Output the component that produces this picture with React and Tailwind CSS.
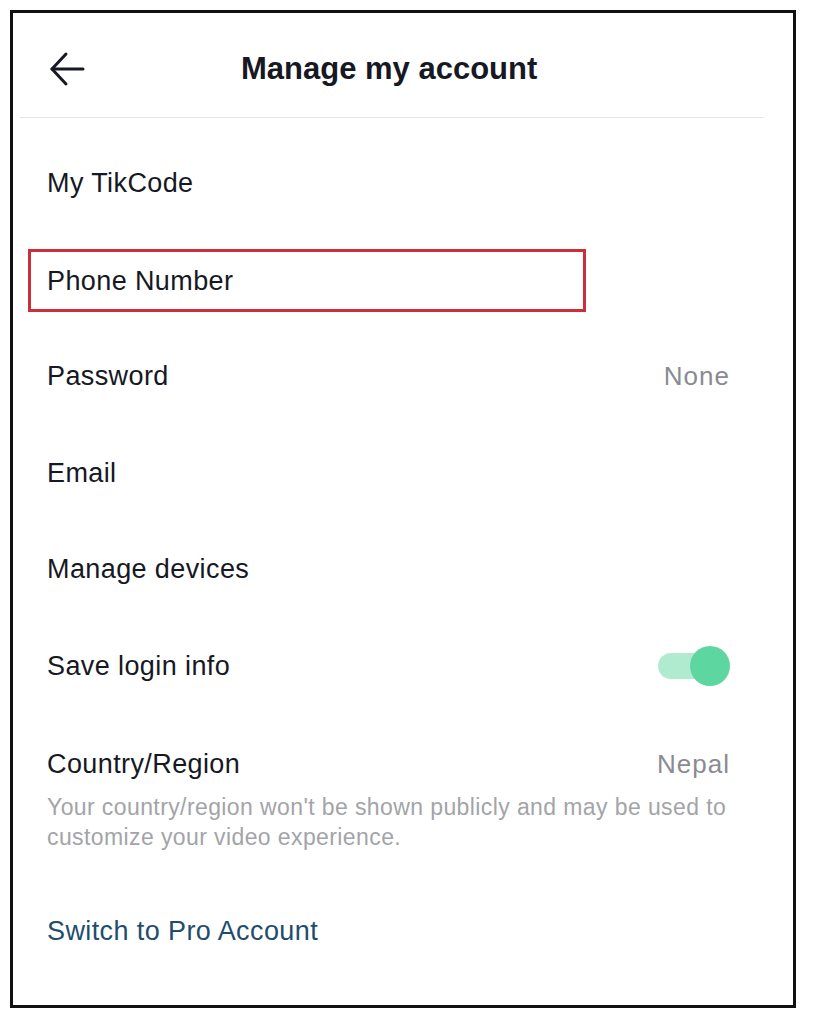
import React from 'react';

const font = { fontFamily: '"Liberation Sans", Arial, sans-serif' };

function BackArrow() {
    return (
        <svg width="36" height="36" viewBox="0 0 36 36" fill="none" stroke="#161823" strokeWidth="3" strokeLinecap="round" strokeLinejoin="round">
            <path d="M34 18H3" />
            <path d="M17 3L3 18l14 15" />
        </svg>
    );
}

function Toggle() {
    return (
        <div className="flex items-center w-[72px] h-[42px]">
            <div className="w-[60px] h-[26px] rounded-full bg-[#b0ebd0] flex items-center justify-end">
                <div className="w-[40px] h-[40px] rounded-full bg-[#5ed69f] -mr-[12px]" />
            </div>
        </div>
    );
}

function Row({ label, value, children }) {
    return (
        <div className="h-[96.5px] flex items-center justify-between pl-[34px] pr-[63px]">
            <span className="text-[27px] leading-[36px] tracking-[0.4px] text-[#161823]">{label}</span>
            {value && <span className="text-[26px] leading-[36px] tracking-[1px] text-[#8a8b91]">{value}</span>}
            {children}
        </div>
    );
}

export default function App() {
    return (
        <div className="min-h-[1024px] bg-white pt-[10px] pl-[10px]" style={font}>
            <div className="w-[786px] h-[998px] border-[3px] border-[#111111] flex flex-col">
                {/* header */}
                <div className="h-[104px] pt-[8px] flex items-center">
                    <div className="ml-[36px]">
                        <BackArrow />
                    </div>
                    <h1 className="ml-[156px] text-[31px] font-bold text-[#161823]">Manage my account</h1>
                </div>
                <div className="ml-[7px] w-[743px] h-px bg-[#e4e4e6]" />

                <div className="pt-[17px] flex flex-col">
                    <Row label="My TikCode" />
                    <div className="h-[96.5px] flex items-center pt-[2px]">
                        <div className="ml-[15px] w-[558px] h-[63px] border-[3px] border-[#cc2f3a] flex items-center pl-[16px]">
                            <span className="text-[27px] leading-[36px] tracking-[0.4px] text-[#161823]">Phone Number</span>
                        </div>
                    </div>
                    <Row label="Password" value="None" />
                    <Row label="Email" />
                    <Row label="Manage devices" />
                    <Row label="Save login info">
                        <Toggle />
                    </Row>

                    <div className="pt-[32px] pl-[34px] pr-[63px]">
                        <div className="flex items-center justify-between">
                            <span className="text-[27px] leading-[36px] tracking-[0.4px] text-[#161823]">Country/Region</span>
                            <span className="text-[26px] leading-[36px] tracking-[1px] text-[#8a8b91]">Nepal</span>
                        </div>
                        <p className="mt-[10px] text-[23px] leading-[30px] tracking-[0.4px] text-[#a3a4a8]">
                            Your country/region won't be shown publicly and may be used to customize your video experience.
                        </p>
                        <p className="mt-[61px] text-[27px] leading-[36px] tracking-[0.4px] text-[#1f4d6e]">Switch to Pro Account</p>
                    </div>
                </div>
            </div>
        </div>
    );
}
